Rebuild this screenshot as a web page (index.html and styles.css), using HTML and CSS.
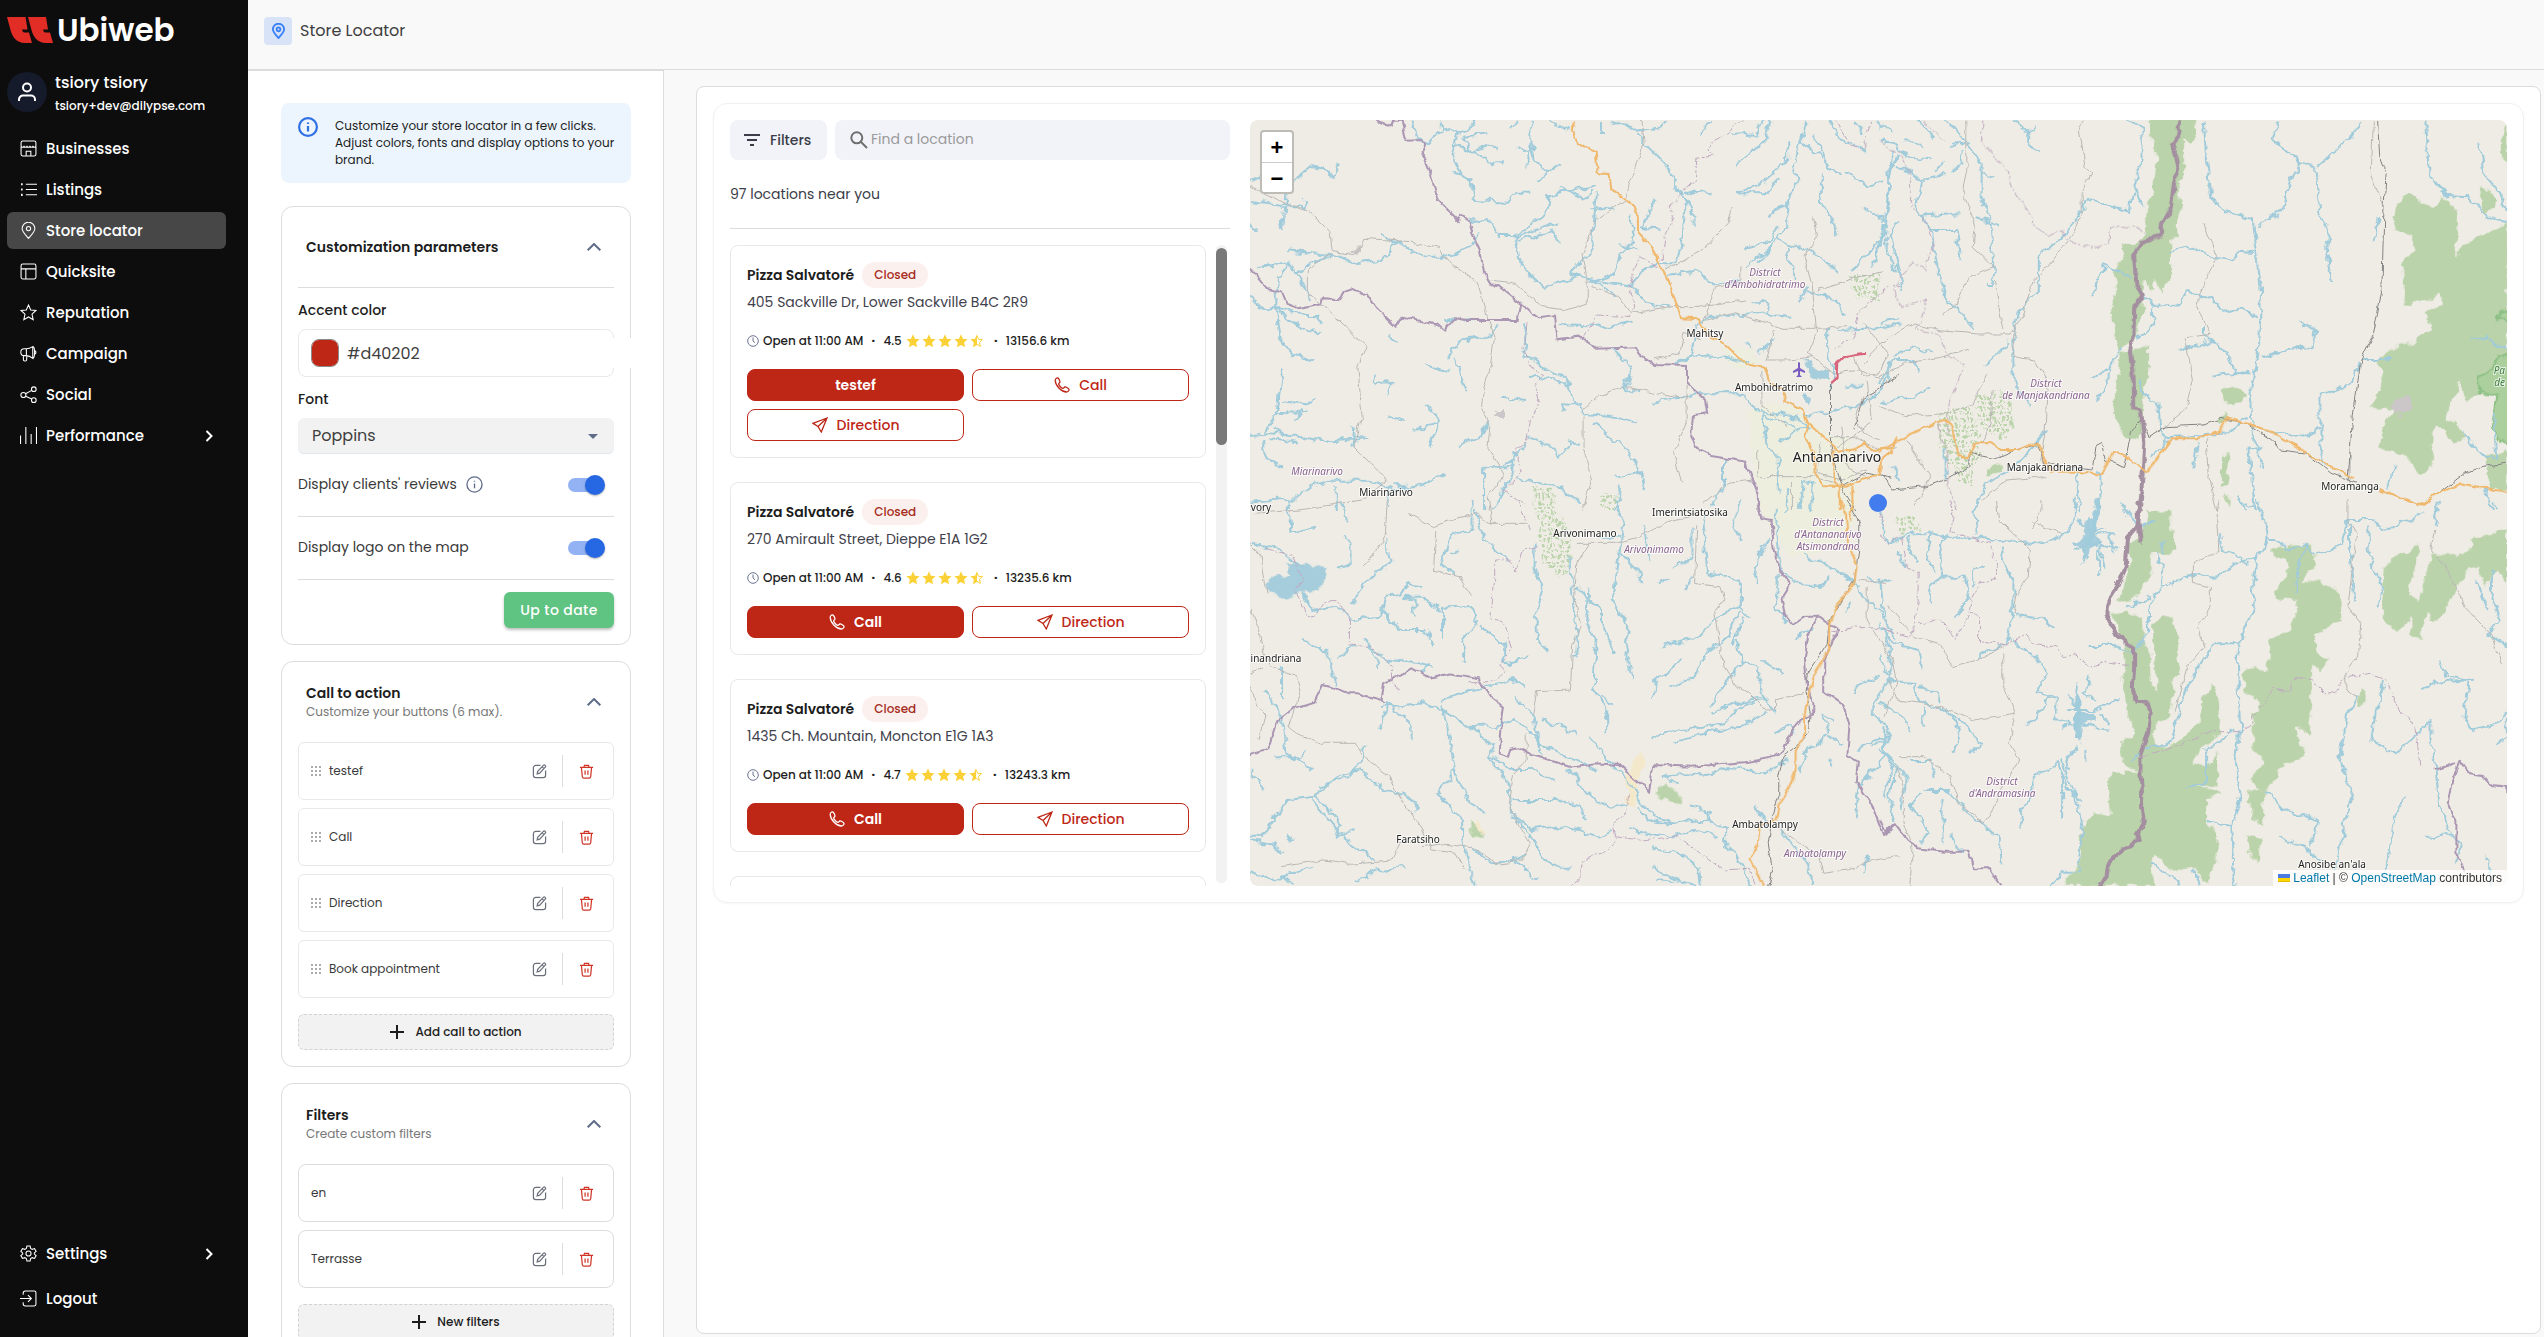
FILE: index.html
```html
<!DOCTYPE html>
<html lang="en">
<head>
<meta charset="UTF-8">
<meta name="viewport" content="width=device-width, initial-scale=1">
<title>Store Locator</title>
<link rel="stylesheet" href="styles.css">
</head>
<body>

<!-- Icons -->
<svg class="sprite" aria-hidden="true">
  <symbol id="i-shop" viewBox="0 0 16 16"><path d="M1 5.500V2.500A1.500 1.500 0 0 1 2.500 1h11A1.500 1.500 0 0 1 15 2.500v3M1 5.500c0 1.800 2.800 1.800 2.800 0 0 1.800 2.800 1.800 2.800 0 0 1.800 2.800 1.800 2.800 0 0 1.800 2.800 1.800 2.800 0 0 1.800 2.800 1.800 2.800 0M1 6v7.500A1.500 1.500 0 0 0 2.500 15h11a1.500 1.500 0 0 0 1.500-1.500V6M5.800 15v-4.500h4.400V15"/></symbol>
  <symbol id="i-list" viewBox="0 0 16 16"><path d="M5.500 3H16M5.500 8H16M5.500 13H16"/><path stroke-width="2" d="M1 3h1.500M1 8h1.500M1 13h1.500"/></symbol>
  <symbol id="i-pin" viewBox="0 0 16 16"><path d="M8 15.500C5 12 2 9.200 2 6.200a6 6 0 0 1 12 0C14 9.200 11 12 8 15.500z"/><circle cx="8" cy="6.200" r="2"/></symbol>
  <symbol id="i-layout" viewBox="0 0 16 16"><rect x="1" y="1" width="14" height="14" rx="1.500"/><path d="M1 5.500h14M5.500 5.500V15"/></symbol>
  <symbol id="i-star" viewBox="0 0 16 16"><path d="M8 1l2.100 4.600 4.900.5-3.700 3.400 1.100 5.200L8 12.200l-4.400 2.500 1.100-5.200L1 6.100l4.900-.5z"/></symbol>
  <symbol id="i-horn" viewBox="0 0 16 16"><path d="M12 1.500v11C10 10.800 8 10 6 10H4a3.200 3.200 0 0 1 0-6.500h2c2 0 4-.8 6-2zM6 3.500V10M3.200 10v4.200c0 1 2.600 1.200 3 0L6.500 10M12 1.500c2.300 0 2.300 11 0 11M14 5.500c1.300 0 1.300 3 0 3"/></symbol>
  <symbol id="i-share" viewBox="0 0 16 16"><circle cx="3.200" cy="8.500" r="2.400"/><circle cx="13" cy="3" r="2.200"/><circle cx="13" cy="13.300" r="2.200"/><path d="M5.300 7.300 11 4.100M5.300 9.700l5.800 2.500"/></symbol>
  <symbol id="i-bars" viewBox="0 0 16 16"><path d="M.5 8v8M5.500 0v16M10.500 6.500V16M15.500 0v16"/></symbol>
  <symbol id="i-gear" viewBox="0 0 16 16"><circle cx="8" cy="8" r="2.400"/><path d="M6.500 1h3l.5 2.200 1.500.9 2.200-.7 1.500 2.600L13.500 7.500v1l1.700 1.500-1.500 2.600-2.200-.7-1.500.9L9.500 15h-3L6 12.800l-1.500-.9-2.200.7L.8 10l1.700-1.500v-1L.8 6l1.500-2.600 2.200.7L6 3.200z"/></symbol>
  <symbol id="i-logout" viewBox="0 0 16 16"><path d="M3 4.500V3a2 2 0 0 1 2-2h8.500A1.500 1.500 0 0 1 15 2.500v11a1.500 1.500 0 0 1-1.500 1.500H5a2 2 0 0 1-2-2v-1.500M0 8h10.500M7.500 4.800 10.700 8l-3.200 3.200"/></symbol>
  <symbol id="i-user" viewBox="0 0 20 20"><circle cx="10" cy="5.500" r="4"/><path d="M2 19v-1.500a4 4 0 0 1 4-4h8a4 4 0 0 1 4 4V19"/></symbol>
  <symbol id="i-right" viewBox="0 0 8 12"><path d="M1.500 1l5 5-5 5"/></symbol>
  <symbol id="i-up" viewBox="0 0 14 8"><path d="M.7 7.300 7 1l6.300 6.300"/></symbol>
  <symbol id="i-info" viewBox="0 0 18 18"><circle cx="9" cy="9" r="8"/><path d="M9 8v5M9 5v1.200"/></symbol>
  <symbol id="i-edit" viewBox="0 0 16 16"><path d="M9 1.500H4A2.500 2.500 0 0 0 1.500 4v8A2.500 2.500 0 0 0 4 14.500h8a2.500 2.500 0 0 0 2.500-2.500V7M5.500 10.500l.6-2.700 6-6.300a1.300 1.300 0 0 1 2 1.900L8.200 9.700zM10.800 3l1.900 1.900"/></symbol>
  <symbol id="i-trash" viewBox="0 0 16 16"><path d="M1 3.600h14M5.300 3.400l.5-1.900h4.400l.5 1.900M2.600 3.800l.9 9.700a1.700 1.700 0 0 0 1.700 1.500h5.600a1.700 1.700 0 0 0 1.700-1.500l.9-9.700M6.500 7v4.500M9.500 7v4.500"/></symbol>
  <symbol id="i-grip" viewBox="0 0 10 10"><path d="M0 0h2v2H0zM4 0h2v2H4zM8 0h2v2H8zM0 4h2v2H0zM4 4h2v2H4zM8 4h2v2H8zM0 8h2v2H0zM4 8h2v2H4zM8 8h2v2H8z"/></symbol>
  <symbol id="i-plus" viewBox="0 0 14 14"><path d="M7 0v14M0 7h14"/></symbol>
  <symbol id="i-filter" viewBox="0 0 16 12"><path d="M0 1h16M3 6h10M6 11h4"/></symbol>
  <symbol id="i-search" viewBox="0 0 18 18"><circle cx="6.800" cy="6.800" r="5.500"/><path d="M11 11l6 6"/></symbol>
  <symbol id="i-clock" viewBox="0 0 12 12"><circle cx="6" cy="6" r="5.300"/><path d="M6 2.500V6l2 1.800"/></symbol>
  <symbol id="i-rate" viewBox="0 0 14 14"><path d="M7 .3l1.900 4.500 4.700.5-3.500 3.200 1 4.800L7 10.900l-4.100 2.400 1-4.800L.4 5.300l4.700-.5z"/></symbol>
  <symbol id="i-rate-half" viewBox="0 0 14 14"><path d="M7 .3v10.600l-4.100 2.400 1-4.800L.4 5.300l4.700-.5z"/><path fill="none" stroke="#fbd137" stroke-width="1" d="M7 1.500l1.600 3.800 3.900.4-3 2.700.9 4L7 10.300"/></symbol>
  <symbol id="i-phone" viewBox="0 0 16 16"><path d="M1.200 3.500C1 2 2.500.8 3.700 1c1 .1 2.500 3.300 2.200 4.200-.2.7-1.300 1-1.200 1.900.3 1.500 2.600 4 4.200 4.300.9.100 1.200-1.200 2-1.400.9-.2 3.900 1.300 4.100 2.300.2 1.300-1.200 2.700-2.500 2.700C7.500 15 1.500 8.800 1.200 3.500z"/></symbol>
  <symbol id="i-send" viewBox="0 0 16 16"><path d="M15 1 1 6.300l5 3.200L9.300 15zM15 1 6 9.500"/></symbol>
</svg>

<div class="app">
  <aside class="sidebar">
    <div class="logo">
      <svg width="47" height="26" viewBox="0 0 47 26" aria-hidden="true">
        <path d="M0 0h18.500l2 12.500H15c.3 1.600 1 2.600 2 3h5l3 10.500h-7C9 26 5 19 3.500 13z"/>
        <path d="M21 0h18l2 12.500h-5c.3 1.600 1 2.600 2 3h5L46 26h-7c-9 0-13-7-14.500-13z"/>
      </svg>
      <span>Ubiweb</span>
    </div>
    <div class="user">
      <span class="avatar"><svg width="20" height="20"><use href="#i-user"/></svg></span>
      <div>
        <div class="user-name">tsiory tsiory</div>
        <div class="user-mail">tsiory+dev@dilypse.com</div>
      </div>
    </div>
    <nav class="nav">
      <a href="#"><svg><use href="#i-shop"/></svg>Businesses</a>
      <a href="#"><svg><use href="#i-list"/></svg>Listings</a>
      <a href="#" class="active"><svg><use href="#i-pin"/></svg>Store locator</a>
      <a href="#"><svg><use href="#i-layout"/></svg>Quicksite</a>
      <a href="#"><svg><use href="#i-star"/></svg>Reputation</a>
      <a href="#"><svg><use href="#i-horn"/></svg>Campaign</a>
      <a href="#"><svg><use href="#i-share"/></svg>Social</a>
      <a href="#"><svg><use href="#i-bars"/></svg>Performance<svg class="arrow"><use href="#i-right"/></svg></a>
    </nav>
    <nav class="nav nav-bottom">
      <a href="#"><svg><use href="#i-gear"/></svg>Settings<svg class="arrow"><use href="#i-right"/></svg></a>
      <a href="#"><svg><use href="#i-logout"/></svg>Logout</a>
    </nav>
  </aside>

  <div class="page">
    <header class="topbar">
      <span class="topbar-icon"><svg width="15" height="16"><use href="#i-pin"/></svg></span>
      <h1>Store Locator</h1>
    </header>

    <div class="content">
      <section class="settings">
        <div class="info">
          <svg width="20" height="20"><use href="#i-info"/></svg>
          <p>Customize your store locator in a few clicks. Adjust colors, fonts and display options to your brand.</p>
        </div>

        <div class="panel">
          <div class="panel-head tall">
            <h2>Customization parameters</h2>
            <button class="toggle" aria-label="Collapse"><svg><use href="#i-up"/></svg></button>
          </div>
          <label class="field-label" for="accent">Accent color</label>
          <div class="color-field">
            <input type="color" value="#be2616" aria-label="Pick color">
            <input type="text" id="accent" value="#d40202">
          </div>
          <label class="field-label" for="font">Font</label>
          <div class="select">
            <select id="font"><option>Poppins</option></select>
          </div>
          <div class="switch-row">
            <label for="reviews">Display clients' reviews</label>
            <svg width="17" height="17"><use href="#i-info"/></svg>
            <input type="checkbox" id="reviews" checked>
          </div>
          <div class="switch-row">
            <label for="maplogo">Display logo on the map</label>
            <input type="checkbox" id="maplogo" checked>
          </div>
          <button class="save">Up to date</button>
        </div>

        <div class="panel">
          <div class="panel-head">
            <div>
              <h2>Call to action</h2>
              <p>Customize your buttons (6 max).</p>
            </div>
            <button class="toggle" aria-label="Collapse"><svg><use href="#i-up"/></svg></button>
          </div>
          <ul class="items light">
            <li><svg class="grip"><use href="#i-grip"/></svg><span>testef</span><button aria-label="Edit"><svg><use href="#i-edit"/></svg></button><button class="delete" aria-label="Delete"><svg><use href="#i-trash"/></svg></button></li>
            <li><svg class="grip"><use href="#i-grip"/></svg><span>Call</span><button aria-label="Edit"><svg><use href="#i-edit"/></svg></button><button class="delete" aria-label="Delete"><svg><use href="#i-trash"/></svg></button></li>
            <li><svg class="grip"><use href="#i-grip"/></svg><span>Direction</span><button aria-label="Edit"><svg><use href="#i-edit"/></svg></button><button class="delete" aria-label="Delete"><svg><use href="#i-trash"/></svg></button></li>
            <li><svg class="grip"><use href="#i-grip"/></svg><span>Book appointment</span><button aria-label="Edit"><svg><use href="#i-edit"/></svg></button><button class="delete" aria-label="Delete"><svg><use href="#i-trash"/></svg></button></li>
          </ul>
          <button class="add"><svg><use href="#i-plus"/></svg>Add call to action</button>
        </div>

        <div class="panel">
          <div class="panel-head">
            <div>
              <h2>Filters</h2>
              <p>Create custom filters</p>
            </div>
            <button class="toggle" aria-label="Collapse"><svg><use href="#i-up"/></svg></button>
          </div>
          <ul class="items">
            <li><span>en</span><button aria-label="Edit"><svg><use href="#i-edit"/></svg></button><button class="delete" aria-label="Delete"><svg><use href="#i-trash"/></svg></button></li>
            <li><span>Terrasse</span><button aria-label="Edit"><svg><use href="#i-edit"/></svg></button><button class="delete" aria-label="Delete"><svg><use href="#i-trash"/></svg></button></li>
          </ul>
          <button class="add"><svg><use href="#i-plus"/></svg>New filters</button>
        </div>
      </section>

      <main class="preview">
        <div class="locator">
          <div class="results">
            <div class="search-row">
              <button class="filter-btn"><svg><use href="#i-filter"/></svg>Filters</button>
              <label class="search"><svg><use href="#i-search"/></svg><input type="text" placeholder="Find a location"></label>
            </div>
            <p class="count">97 locations near you</p>
            <div class="list-wrap">
              <div class="list">
                <article class="store">
                  <div class="store-title"><h3>Pizza Salvatoré</h3><span class="badge">Closed</span></div>
                  <p class="address">405 Sackville Dr, Lower Sackville B4C 2R9</p>
                  <div class="meta"><svg class="clock"><use href="#i-clock"/></svg><b>Open at 11:00 AM</b><i>·</i><span>4.5</span><span class="stars"><svg><use href="#i-rate"/></svg><svg><use href="#i-rate"/></svg><svg><use href="#i-rate"/></svg><svg><use href="#i-rate"/></svg><svg><use href="#i-rate-half"/></svg></span><i>·</i><span>13156.6 km</span></div>
                  <div class="actions">
                    <button class="primary">testef</button>
                    <button><svg><use href="#i-phone"/></svg>Call</button>
                    <button><svg><use href="#i-send"/></svg>Direction</button>
                  </div>
                </article>
                <article class="store">
                  <div class="store-title"><h3>Pizza Salvatoré</h3><span class="badge">Closed</span></div>
                  <p class="address">270 Amirault Street, Dieppe E1A 1G2</p>
                  <div class="meta"><svg class="clock"><use href="#i-clock"/></svg><b>Open at 11:00 AM</b><i>·</i><span>4.6</span><span class="stars"><svg><use href="#i-rate"/></svg><svg><use href="#i-rate"/></svg><svg><use href="#i-rate"/></svg><svg><use href="#i-rate"/></svg><svg><use href="#i-rate-half"/></svg></span><i>·</i><span>13235.6 km</span></div>
                  <div class="actions">
                    <button class="primary"><svg><use href="#i-phone"/></svg>Call</button>
                    <button><svg><use href="#i-send"/></svg>Direction</button>
                  </div>
                </article>
                <article class="store">
                  <div class="store-title"><h3>Pizza Salvatoré</h3><span class="badge">Closed</span></div>
                  <p class="address">1435 Ch. Mountain, Moncton E1G 1A3</p>
                  <div class="meta"><svg class="clock"><use href="#i-clock"/></svg><b>Open at 11:00 AM</b><i>·</i><span>4.7</span><span class="stars"><svg><use href="#i-rate"/></svg><svg><use href="#i-rate"/></svg><svg><use href="#i-rate"/></svg><svg><use href="#i-rate"/></svg><svg><use href="#i-rate-half"/></svg></span><i>·</i><span>13243.3 km</span></div>
                  <div class="actions">
                    <button class="primary"><svg><use href="#i-phone"/></svg>Call</button>
                    <button><svg><use href="#i-send"/></svg>Direction</button>
                  </div>
                </article>
                <article class="store"></article>
              </div>
              <div class="scrollbar"><div class="thumb"></div></div>
            </div>
          </div>

          <div class="map">
            <svg class="map-art" viewBox="0 0 1257 766" preserveAspectRatio="xMidYMid slice" role="img" aria-label="Map around Antananarivo">
              <defs>
                <filter id="rough" filterUnits="userSpaceOnUse" x="0" y="0" width="1257" height="766" color-interpolation-filters="sRGB">
                  <feTurbulence type="fractalNoise" baseFrequency="0.09" numOctaves="3" seed="4"/>
                  <feDisplacementMap in="SourceGraphic" scale="10" xChannelSelector="R" yChannelSelector="G"/>
                </filter>
                <filter id="rough-sm" filterUnits="userSpaceOnUse" x="0" y="0" width="1257" height="766" color-interpolation-filters="sRGB">
                  <feTurbulence type="fractalNoise" baseFrequency="0.1" numOctaves="2" seed="9"/>
                  <feDisplacementMap in="SourceGraphic" scale="6" xChannelSelector="R" yChannelSelector="G"/>
                </filter>
                <pattern id="scrub" width="9" height="11" patternUnits="userSpaceOnUse">
                  <path class="wood" d="M0 1h3v3H1zM5 0l3 2-2 3zM2 6l3-1 1 4-3 1zM7 7h2v3z"/>
                </pattern>
              </defs>

              <!-- woods and lakes -->
              <g filter="url(#rough)">
                <g class="farm">
                  <path d="M500 290l40-10 30 30 30 10 10 60-20 50-50 6-30-50-10-60zM470 226l30 4 10 16-26 4z"/>
                </g>
                <g class="scrub">
                  <path d="M280 365l22 4 6 24 14 20-4 40-14 6-12-20-4-40zM353 372l14 2-4 14-12 0zM688 293l30-8 10 20 4 34-14 14-20-10-10-20zM704 326l18 0 2 40-16-6zM726 276l34-6 4 30-10 20-26-14zM600 155l28 0 0 24-26-2zM642 395l20 0 12 14-24 6z"/>
                </g>
                <g transform="translate(630 -30) scale(.4235 .3333)" class="wood">
                  <path d="M635 80L750 80 745 130 735 165 718 150 718 250 705 300 715 350 705 400 708 440 685 450 688 550 665 605 650 570 640 595 620 575 615 640 625 650 605 740 570 780 555 740 545 660 560 600 550 540 575 500 565 460 600 470 620 440 630 370 645 300 655 190 645 175z"/>
                  <path d="M570 790L635 760 635 830 625 900 615 1050 580 1040 550 970 560 860z"/>
                  <path d="M1212 380L1237 315 1262 310 1272 340 1310 348 1325 322 1340 330 1365 370 1362 440 1355 500 1395 455 1430 430 1481 400V795L1450 830 1415 870 1420 915 1380 930 1370 870 1350 940 1330 985 1360 1000 1385 1045 1355 1060 1330 1020 1310 1000 1300 1060 1310 1110 1275 1155 1245 1100 1215 1085 1180 1080 1185 1020 1210 960 1160 950 1190 870 1175 815 1230 760 1260 760 1300 720 1285 665 1330 640 1320 610 1290 635 1235 645 1240 560 1230 520 1260 480 1250 440 1215 420z"/>
                  <path class="park-edge" d="M1490 795H1460L1450 830 1412 865 1415 910 1455 915 1445 1010 1465 1055 1490 1060zM1490 690H1458L1466 660H1490z"/>
                  <path d="M1420 290l30 20 5 40-30 20-10-30zM1481 100v120l-15-20 0-60zM1435 1100l46-20v120h-46zM805 905l30-15 30 25-30 35-25-15zM800 985l20-20 0 30-20 10zM805 1100l20-15-5 100-15 10zM250 1130l40-10 0 25-40 10zM810 1210l20 20-5 20z"/>
                </g>
                <g transform="translate(630 380) scale(.4235 .3333)" class="wood">
                  <path d="M628 40L685 32 688 90 700 130 685 165 640 160 638 230 600 300 560 305 590 200 585 130 625 90z"/>
                  <path d="M550 345L585 335 618 350 622 430 635 440 640 560 655 570 645 480 645 365 665 348 690 350 700 400 698 480 715 500 695 530 685 650 655 670 640 700 655 740 700 730 750 660 765 590 785 545 805 620 800 700 760 750 735 790 765 800 795 755 800 860 700 850 620 820 570 790 570 720 600 710 585 640 570 560 580 440z"/>
                  <path d="M545 815H600L680 830 810 880 770 900 770 970 795 1000 795 1080 770 1150 740 1100 700 1115 640 1060 645 1158H430L470 1090 470 1010 500 935 545 950 540 850z"/>
                  <path d="M920 150L950 135 1020 130 1030 190 1000 240 1040 250 1085 270 1090 360 1025 405 1030 450 1055 480 1045 520 1020 490 1020 620 1015 700 980 680 1005 770 940 800 935 840 900 870 870 840 905 790 880 730 880 650 900 610 860 570 858 515 885 495 915 515 920 420 965 395 990 300 935 300 930 270 960 230 965 190z"/>
                  <path d="M870 880l35-15 0 110-25-20zM865 1010l40 0-15 80-15-20zM1190 190L1240 160 1265 130 1275 160 1255 230 1250 290 1275 300 1290 220 1300 165 1390 160 1400 115 1481 85V250L1455 210 1430 260 1410 200 1385 205 1340 320 1310 370 1290 340 1275 420 1255 400 1255 350 1215 390 1185 350z"/>
                  <path d="M1135 565l12 10-8 40-10 0z"/>
                </g>
                <g transform="translate(-10 380) scale(.4209 .3333)">
                  <path class="sand" d="M955 750l10 30-20 60-10 80-15-10-5-80zM560 960l15 10 5 30-20 0z"/>
                  <path class="wood" d="M545 960l30 40 5 15-30-10zM985 870l25-20 40 40 0 20-50-10z"/>
                  <path class="lake" d="M115 190l35 0 60 15-20 60-50 20-45 15-30-40 10-30 40 0z"/>
                </g>
                <path class="lake" d="M553 240l20 12 6 0 0 6-16 2zM553 274l8 2-2 8-6-2zM836 396l10 4-4 14 10 8-12 6-2 14-6-14-10-4 12-8zM824 588l8 4 12 0 2 8-12 4-4 20-6-20z"/>
                <path class="rock" d="M1142 285l16-12 6 14-10 8-12-2zM245 290l8 0 0 8-8 0zM100 130l10-4 0 8z"/>
              </g>

              <!-- rivers -->
              <g class="river" filter="url(#rough)">
                <g transform="translate(-10 -30) scale(.4209 .3333)">
                  <path d="M412 92l10 60 25 10 30-40 0-30M480 110l40 20 20-10 20-30M520 130l-15 70 25 60 20 10 5 60 80 5 20-30 30 0M550 190l-20-50 60-10M510 165l60 30 30 25 25 0M530 255l-30-10M555 185l30-20 25 10M690 92l0 90-30-10M690 150l10 60 30 30 35-15M735 240l-35 40M690 180l-8 50M640 120l25-25M860 100l0 35M735 92l45 30M850 285l-115 30-10 60-70 60-35 0-30-40-45-5M760 290l60 40 15-30M848 310l-15 180-50 60M830 355l60 0M655 440l100-40M740 420l20 40M655 440l10 90 60 60 50-20 30-10M660 450l80-25"/>
                  <path d="M880 92l60 30 60-10 15-20M940 130l70 90 40 95 30 60 0 30M1055 315l40-15 30 15M1060 330l-8 100-15 90-40 0M985 330l-20 60-15 20 50 10M925 380l10 70-30 40-15 60-45 20-60-15M840 570l90 20 30-50 35-20M900 460l40 20M930 590l40 50 50 10M780 550l60 20 50 50M1010 555l70-10 50 35 60-5M1090 130l30-35M1165 135l60-5 20-40M1260 92l-10 60-70 70M1180 310l60-30 60-70 0-60M1190 310l60 0 30-40M1200 470l60-15 20-50M1345 92l-10 60-20 60 10 60-25 60 0 80-40 60-60 60M1360 130l40 110 30 10M1380 200l-50-40M1380 250l0 90 30 60 10 30M1320 280l-20 60-50 40M1280 450l40 20 60 30 40 50M1300 470l20 100M1270 460l-40 60M1400 92l30 60 60 30M1568 190l-30 60 5 60-20 140-70 90M1480 350l50 40M1440 240l30 30 20 20 40-10M1560 400l-30 60 30 90M1550 130l-40-30M1480 130l-20-35M1340 600l80 30 20 50M1220 630l35 5 0 35-130 10-40 20-10 90-40 40M1250 670l60 10M1350 590l-20 50"/>
                  <path d="M24 330l70 10 60 20 0-30M100 420l8-110M24 270l50-20 10-30M130 270l40-45 30 10 20 30 15-45M24 400l15 25M105 480l110 15 60 25 60-10 35-50 70 40 50 0 60-30 15-40M335 430l35 30M45 535l70-20 15 30 90-50M120 510l-30 60-5 90 10 90 30 45 50 10M135 545l35 85M24 615l20 40 50 0 60 20 30 0M90 660l50 50 50 20M180 670l10 35M490 690l60-5M615 700l-20 35-80 20-20 50M510 800l30 110M440 825l60 15M355 740l20 20M325 850l0 40M325 880l40-5-15 35M755 705l100 5 80-15M680 700l-5 100 50 30 45 30 30 80 15 30 60 10 70 15M770 970l-5-30 50 5M890 780l40 50-15 70 40 10M840 1000l60 60 30 30 20 60 10 50M690 860l60 5 30 30M620 920l60 10M350 980l40 10M445 945l30 50-25 70M475 1000l-60 20M590 990l-20 50-50 30M685 1040l60 30 15 30 30-40M775 1050l30 15M980 935l80-15 30-10 90 0 60 60 50 0 60 40M1030 830l30-30 90 0 60 20M1230 790l40-45M1210 780l-5-30"/>
                  <path d="M100 835l-10 130-30 60 60 10 90 20 90-10M24 1040l40-10M80 1015l30 20M100 935l60 5 20-10M90 965l70 5M150 960l-20 30M75 1045l60 10M60 1050l0 50 40 30M270 1000l-5 70M265 1040l40 10M24 1235l110-10 40-40 40-10 90 0 60 20 70-10 50-30M230 1190l0 70M350 1190l5 60M370 1180l30 20M580 1260l0-120 60-20 40-60M590 1135l60-5M600 1260l40-90 15-90M660 1160l100 30 50 50M960 1200l-10-50-60 10M890 1260l15-70M1150 1110l0 80-30 50M1240 960l10 90 30 60 0 100M1240 980l80 30M1280 1060l40-40 30-10M1340 980l120-30 30-10 40-60 20-60M1395 720l0 60 20 60-10 50M1420 720l90-5 60-15M1440 890l40 0M1330 1260l10-80 20-10 0 90M1300 1260l5-60M1550 1130l15 40"/>
                </g>
                <g transform="translate(630 -30) scale(.4235 .3333)">
                  <path d="M0 150l30 10 40 40 50 5M30 180l-10 100-10 150-30 100M25 430l30 180M40 230l60 40 50-15M95 270l-10 90 40 60 5 70 20 130 35 40 40 60M100 380l90-10M130 420l50 0 10 90M90 92l40 50M60 150l40 20M150 92l50 50 40 80 0 110 20 50 10 200-15 0M230 385l55 15M245 250l25 15M200 150l-30 20M195 180l0 40-25 20M130 245l20-25M320 92l30 30 0 40 30 20M345 130l20-20M580 92l40 20 0 100-20 80-10 70-100-30-20 50-60 80-35 40 0 100-50 60-10 80 0 130 40 80M305 760l-60 70M600 290l20 65M500 620l30-100 60 40M765 92l5 120 10 110 50 50 50 15 10 100 10 120-5 160-20 140 5 100 10 90 20 40M675 490l60-20 60 35 35 5 15-25 45 5M945 92l-15 60 60 60-30 100-10 50-60 50M990 215l40 15 10 140 20 60-5 60 15 90M1035 225l50-50 15-20 40-60M1180 380l-15 80M615 610l30 35 60-5 20-40 60 30 30 35 40-10 35 30M645 650l0 60-45 40M765 705l0 30 55 50 15 60 40 5M710 780l80-30M785 860l50-10 35 0M900 800l60-20 60-5 10-55-40-20M1290 92l5 150 40 75 50 5 50 60 45 15M1415 160l10 90 40 60 15 50M1140 810l75 0M1135 815l-20 60-75 40 0 160 10 50M1040 1010l-40 30-90-15M610 875l30 60 20 10 5 90 20 10M580 770l-40 60 0 50-30 50M500 870l40-35M870 980l-50 50-140 15-40 60M745 1060l-5 70M900 1070l-30 10 15 180M1395 740l40 5 25 25 20 0M1380 1030l30 60 40 20M1450 960l5 150M1215 1125l-20 70M0 940l80-20 40-30M0 700l40-15M0 880l30-70 50 0 10 40M30 800l50-30 40 15M390 1020l-20 40-60 80-60 40-25 80M155 1075l0 90M465 1150l5 110M515 1150l5 110M845 1220l20 40M1430 1200l20 60"/>
                </g>
                <g transform="translate(-10 380) scale(.4209 .3333)">
                  <path d="M115 0l5 100 60-20M240 0l15 70M245 100l20 30 0 60-40 20M350 110l5 80-60 60-30 60M30 135l60 10 60 60M150 280l20 50 60-10 40 40 60-10 20-60 30-10 20-30 30 15M340 330l40 60 60 0 20 50M385 290l30 10 0 50M550 0l0 90-50 15-25 90 35 30M560 30l20 90 55 60M500 160l20-10M480 410l0-90 70-5 10 60-30 50 0 60M475 330l-40-40-50 0M570 380l60 50 0 60 55-15M150 420l60 40 15 100M225 480l50-50M290 420l60 60 80 10 30 10M430 520l20-30M310 440l20 70M700 130l0 80 20 40-15 100 0 60 25 50M780 170l10 80 10 160-5 60M800 260l60 70 0 40 30 90M830 260l-5 100 20 60-5 140 30 60 0 80M860 590l30 20M890 0l20 60-10 90-10 120-10 30 45 80-10 50 15 110M900 160l50 60 0 30M850 110l50 0M1100 40l10 180 80 20 0 80 20 30M1190 0l-20 70 20 50M1260 110l-30 60-5 80M1075 80l0 90-50 40M960 70l10 110M1000 250l20-15M1060 270l15-40"/>
                  <path d="M1190 320l-60 30-40 60-70 20-20 10M1190 330l-30 80-60 60-20 60-60 30M1050 480l-60 60-10 60M1180 420l10 60 40 20 10 80 30 60M1230 480l60 40M1200 480l-40 60-50 80M1240 590l-60 20-60 30M1250 630l-60 50-100 20-60 30M1250 600l-50 10-50 60-100 20-50 10-20 15M1200 350l-20 50-10 40M1270 30l10 160 40 60 60 10 20-30M1280 220l-10 100 30 50M1360 380l-40 40M1340 160l60 40 60 40 20 50 40 40 40 90M1380 640l20 60-60 60-10 50M1380 640l30 20M1270 700l30-20 20 20M1400 770l5 30M1300 780l-40 40-90-15-60 20-50-5-60 15M1000 830l40 20M1490 240l60 10M1440 340l10-40M1530 380l20 120-30 90-20 50 40 40-10 90-60 90-10 90M1520 530l-50 20-10 40M1540 700l-70 50M1550 800l-20 90M1545 920l10 50M1500 740l40-20"/>
                  <path d="M60 570l30 60 15 50 5 80 60 45M100 500l0 100M155 750l-15 25-60 0M24 810l30 55M24 1010l30 0 30-60 30-50 60-10 60-60 50-20 60 60 60 20 20 40M180 890l60 80-15 40 50-25M170 900l60 90 20 30 70 60M260 830l-70 30M300 740l-20 60-20 30M330 690l20-80 60 60 0 45M340 620l100-10 40 20 60 50 60 0 50-20 50 40 15 60M480 610l20 120 10 80-40 70 60 80 0 60 10 60 20 80M475 600l110-40 60-25 30 30M545 680l60 60-10 30 50 40 60 0 40 40M510 810l30 90 40 40M590 770l50 80 10 100 40 60 30 60 30 30 40 0M655 950l40 40 50-10 60 10 50 20 30-20M650 900l100 0 60 20 10 40M650 590l50 60 10 80 60 40 50 20 30 20M720 660l80 40M780 800l40 80 60 40 40-10M835 720l60 90 40 50 10 40 40 50 50 20M945 920l20 40 50 10 80-10 60 20 0 60 30 40 30 90M925 980l30 20 60 10 60-20 60 20M1070 915l40 20 10 40M980 1045l60 10 50 50 5 50M975 1100l60 40 50 15M980 1140l50 10M1225 920l30 60M1280 980l40 70 30 40 5 68M1430 730l-30-20M24 1120l50 20 100-40M100 1130l30 20M270 1150l60-40 60-10M110 1000l15 20M24 1020l50 10 30 30M550 1040l50 50 50-10 60 60M640 1080l40-20M1495 1060l-15 60"/>
                </g>
                <g transform="translate(630 380) scale(.4235 .3333)">
                  <path d="M0 40l20 90 50-30 50 0 40 10 60 0 50 10 100 10 60-20 30-40 0-80M230 0l-5 100M120 100l-10 60 20 60M65 110l10 50 15 30M60 200l-20-40M160 100l-20 40 10 90 50 0 10 60-30 60M150 220l-30 40 5 60M285 140l10 60 20 40 0 80-15 110M250 200l-30 0 0 60M0 230l10 120M0 370l30 60 60 20 15 60M0 460l20 80 60 10 10 50 60 30 30 20 60 80-30 30M90 560l50 20 0 30M100 620l5 60M0 610l60 50 15 30M170 640l20 60-20 60M300 430l-60 30-15 20M310 420l60 50 20 50-20 60 50 10-5 70 30 10M320 345l60 10 30 25M400 590l-30 60-20 20M10 680l0 80 50 60 0 40-15 70M0 750l40 60-20 80 10 70M70 780l50 0M120 790l10 40M100 870l60 0 40 60 80 80 5 80M90 880l-15 40 40 80-20 30M150 900l0 130M165 1000l30 60M420 785l20 70 30 60 10 80-15 60 5 60-40 0-30 50M420 790l-60 40 0 60-30 40 5 60M430 830l0 130"/>
                  <path d="M850 0l40 30M890 0l20 90 0 30-20 60-10 80 10 40-40 120-5 60 5 200-10 100 10 120-20 90 5 140 15 100M570 10l40 70 40-20M495 435l60 0 40 20 40-60 0-80 30-50 70-40 60 5 60-50 40-5M580 320l60-30M650 160l20 40-5 60M665 120l5 40M800 100l10 50 60 40M910 120l30 0 20 30 40-20 30 30 60-20 15-80 60 0 20 30 100-50M980 280l10-90 20-60M1110 80l0 100 10 120M1150 80l5 90 30 90-10 60M850 430l-60 0-60 120-20 60-20 110-60 30-40 30M840 690l-70 60 0 100-45 10M905 870l30 20 15 40 80 30-10 80M940 1010l60 30 40 40M770 965l60 20M1130 590l-30 60-15 120 30 110-30 160-10 60M1190 540l-20 100-10 80 60 40 60-70 20-30 0 60 10 70 10 110 20 90 30 40-10 60M1290 1010l60 0M1280 570l30-20 80-10-10 110 20 40 60-20 20-40M1320 480l20 50 60 10M1240 890l-30 80-20 190M1450 0l10 30M1445 210l0 80 20 80-30 30 50 40M1405 245l30 80M1480 650l0 60-20 30M640 1090l60 50 10 20M740 1110l20 48M1320 0l-10 80M1435 1070l10 88"/>
                  <path class="wide" d="M515 0l-10 90-15 50M465 590l0 130"/>
                  <path d="M460 130l60-30 40 0M470 60l30 40 30-20M455 150l50-20 60 20M480 190l10-60M515 225l0-80M530 200l-15-80M540 100l10 60M490 50l10 60M495 520l-10 60 25 20M470 560l-5 60M445 580l20 50M440 630l70 0 50-30M430 680l40-10 70 20M520 640l20 30M485 740l0 50M430 780l15 60 25 60M440 860l40 50M460 740l-20 60M450 670l-20 20"/>
                </g>
              </g>

              <!-- minor roads -->
              <g class="road" filter="url(#rough-sm)">
                <g transform="translate(-10 -30) scale(.4209 .3333)">
                  <path d="M24 290l90 55 50 20 50 60 5 60 60 10 15-50 110 10 70 20 30 50 60 50 20 90 20 80-10 90-15 60-5 50 20 60-5 70 40 80-40 60 10 90M215 490l-55 50 0 70 50 50 50 60 40 50-20 60 10 150-20 90 80 100-60 60-150 30-105 10M595 570l60 10 60 70 60 10 50-20 0-60-10-90 30-100 70-60 15-70 30-100-5-70-30-10M1100 700l30-110 60-20 0-40M1010 540l90-60 60-80 10-50M840 590l60 30 30 50 90-20 60 0 60-10 60-10M1110 690l60-20 60 20 60 25 90 0 60-5M1095 750l-40-20-10 60-60 20M1060 880l0 120-30 90 20 90M815 980l0 90 20 100-20 90M815 960l40-45 60-25 60 15 90 20M1270 720l-20 90 60 0 50-10M1360 380l10 60-30 60 20 90 10 140-20 60 60 60 60-10 60 30M1370 600l100-40 60-15M1480 700l60 90-20 60-40 10-20-60M1240 840l0 110 60 60M1400 1040l60 0 60 40 40-10M1380 1060l-10 90 60 20 60-30M1480 920l-20 60 20 50 40 20M1230 1080l0 80 130 0 60 20M1100 1240l60-60 60-10M1310 1180l0 80M1500 1000l-90 80M1430 1010l10 120 60 40M1490 870l10 120"/>
                  <path class="main" d="M1403 880l0 180 10 60 20 80 30 60M1568 850l-90 80-20 90M1430 1190l60-40 60 15"/>
                </g>
                <g transform="translate(630 -30) scale(.4235 .3333)">
                  <path d="M480 92l-10 20 15 120 15 20-25 60 0 60-20 60-60 100-40 60-15 80-30 60-80 0-90-10-60-20-60 40-60 80M205 92l0 150-10 60 30 100-5 70 50 60-60 30-30 80-30 30M270 570l20 150M320 700l-5 100 50 10 30 60-5 150-10 90M765 400l30 100-40 110-5 50 30 70-60 10 20 130-20 90-50 50M770 1045l5 110 20 105M1165 92l-5 160 30 100M1110 1050l0 140M0 860l60-40 90-20 60-20M0 950l60 30 100-10 60-30 30-90M265 900l-5 100-20 60M60 1050l60 110-40 90M240 1230l60-60 90-10"/>
                  <path class="main" d="M1175 92l5 110 15 50-5 100-5 250-20 130-30 80-20 190-10 170M210 1090l60 15 60-30 40-15 20 60 60 10 50 10 10-70 15-10 10 50 40 20 20-110 20-30 20 50 40-30 90-5 40-20 60 15 60 50 20 30 60 10 60 60 60 30M0 1150l30 50 80-10 60-30 40-30 0-40M1180 1200l100 45 40-35 60-60 40-20 60-10"/>
                </g>
                <g transform="translate(-10 380) scale(.4209 .3333)">
                  <path d="M24 130l25 30 15 120M24 330l20 60 10 60 20 50 60 30 10 50-30 100 20 20 60 30 80 0 20 40 60 60 20 50 60 110 20 60 60 10 20 50M350 0l-5 110-30 60-20 25M400 40l60 40 40-20 60-20 30 30 90 0M465 90l-5 120 60 20 30 60M830 130l-30 60-5 100 15 90-20 60-5 130-80 5-10 70M680 700l0 80-30 40-10 90 20 60 30 60-20 50-60 10-60-50-60-10-60 10M430 1030l-50 0-20 50-100 10-60-10-100 20M800 130l90 0 60-20 60-40 60-20M1085 80l-5 170 60 10 10 40-20 30 10 110 10 60 30 60 30 20 40 50 20 0 0-30 70-20M1470 240l60 10M1490 260l0 100 60 120 10 70-30 100M1275 980l100 90 10 50 60-10 60-30 60-10M24 520l30-20M60 640l-15 80M24 560l20 60 20 30"/>
                  <path class="main" d="M1440 0l30 60 0 90-10 90-60 120-5 70-45 90-5 60 10 60-5 60-20 30-40 40-10 60 0 60-15 60-10 80 10 80-10 58"/>
                </g>
                <g transform="translate(630 380) scale(.4235 .3333)">
                  <path d="M275 0l5 60 75 90-5 80-30 60-5 50M360 90l20-60 0-30M360 70l70 30M800 0l-5 60 5 90-60 40 0 60 40 10 0 60-30 60 15 60-40 60-30 140M1105 0l0 60 20 40-20 220 30 50-5 100-30 50 0 50 30 20M1310 90l-10 60 40 60 40 110 60 80 30 90M290 460l0 90 30 90-100 20-60-30-60-20-60-10-20-60M290 440l-60 40-60 20-30-70-60-20-60-90M320 640l-15 90 25 50-30 60-20 40-15 60-20 30-60-60-20-80-60-60-60 0M40 800l15 60 0 100 20 70 0 60-5 68"/>
                </g>
              </g>

              <!-- boundaries -->
              <g class="border" filter="url(#rough-sm)">
                <g transform="translate(-10 -30) scale(.4209 .3333)">
                  <path d="M326 92l34 20 4-20h20l12 60 36-2 10 15-8 23 18 57 11 55 7 30 48 60 6-12 21 17 7 35 18 50 10 70 15 33 17 3 53 54 45 42 36-6 6 72 54-8 30 25 9 11 95-4 10 23 35 30 77 3v52l43 50 5 40-34 5-4 65 18 40 30 18 80 17 15 50 15 45 2 50M24 538l41 59 35 11 10 32 30 15 50-15 5-15 45 3 10-23 16-7 24 14 10-4 25 47 45 55 15-30 85 25 15 17 25-37 30 5h120l8-45"/>
                  <path class="dash" d="M1196 92l-36 38-42 25-6 25 13 18-40 7-3 65-32 45-30 35 8 30-18 60-7 70-13 22-40-32-15 45-10 45 13 60-8 30-85-5-27 70M680 700l-8 80 18 50 32 28-22 22 10 50-20 60-10 70-25 20 13 70-43 50 55 45M1415 92l35 73 30 10 20-83M1568 590l-28 0-40 40-30 35-10 75-45 40"/>
                </g>
                <g transform="translate(630 -30) scale(.4235 .3333)">
                  <path class="thick" d="M706 90l-2 50-14 20 14 60-10 60-8 80-20 40-4 40-45 15-17 40 5 90 15 30-20 40-2 90-8 40 6 60 2 110 18 5 8 100-8 170-8 40 8 90"/>
                  <path class="dash" d="M0 150l20 30 30 10 22 60 0 100 35 40 20 60-20 90-30-25-45 80M240 92l0 60 60 90 10 50 50 90 0 20 40 40 30-20 20 35 60 20 30-20 5-50 60 5 20 15M30 600l20 50 60-20-10 60-20 25 60 20 20 60 40 30-20 60-20 60 0 90M140 1000l0 40 20 50 0 90 20 80M100 92l50 60"/>
                </g>
                <g transform="translate(-10 380) scale(.4209 .3333)">
                  <path d="M1228 0l10 55 25 5 5 90 15 60 25 40-20 40 10 60 15 25 30-25 35 0 20 20 25 20-20 45-15 50 0 90 45 40 15 60-5 90 25 20-5 60 35 60 30 100 20-30 10 0M1370 350l-20 60-8 60 5 90 15 50 0 30-30 20-20 30-20 60-20 20-60 15-140 15-90-5-10 80-70-80-60-5-60 10-60-25-30-10-30-20-20 5-5 20-20-10 5-90 5-50-40-40-20-45-70-15-40 15-30-20-20-10-20 15-45 30-5 50-60-20-20 0-30-15-30-10-20 50-50 20-40 40-20 80-80 40"/>
                  <path class="dash" d="M60 145l60 20 30 80-20 20 30 85 20-5 20-40 30 0 30 50 0 80 50 5 50 60 0 50 20 20M705 140l-30 10-20 60-15-30-35 0 0 60-10 120 30 5 20 80-30 50 15 20-25 30-60 0M690 90l-30-90M1405 400l60-20 40 0 60 20M925 880l-10 60-30 30 10 50-30 40-50 20-10 60-20 18M890 1010l60 10 90-10 50 50 60 50 60-5 15 50"/>
                </g>
                <g transform="translate(630 380) scale(.4235 .3333)">
                  <path class="thick" d="M606 0l10 30-10 50-20 30-6 90-20 60-15 30-10 40 0 20 20 45 20 25 25 25 0 60-3 60 8 40 28 5 6 30-6 60-18 60 0 60 4 60 0 50 4 40-14 30 4 20-50 40-24 30-4 40-16 30 0 50"/>
                  <path d="M0 960l15 40 20-30 30 50 25 25 60 10 60 0 10 50 40 0 25 53M1481 880l0-20-40-5-20-30-30-5-20-35-20 60-10 60 20 60 0 90 20 60M1310 810l50-20"/>
                  <path class="dash" d="M0 110l20 20 30-25 15 100 25 10 0 90-10 80-15 30-60-30M165 0l10 50-10 45 60 25 40 10 0 40 10 30 0 40-40 5-20 50-5 50-30 70-40-60-30 15-20 0M215 340l20 5 0 80 60 10 50-30 20 30 50 5 20 30 20-10 40 40 30-15 70 10M610 770l90-30 80-45 70 0 30-20 0-30 30-40 20-40 40 10 0-30 30-15 25 15 30 40 25-10 15-40 60-15 40 20 30 90 20 20 20 30 10 120M0 40l10 40"/>
                </g>
              </g>

              <!-- primary roads -->
              <g class="primary-road" filter="url(#rough-sm)">
                <g transform="translate(-10 -30) scale(.4209 .3333)">
                  <path d="M798 92l-10 28 17 40 40 25 5 65 28 2 4 48 43 35 20 40 1 55 39 50 13 50 20 40 30 115 42 3 20 47 40 25 50 60 46 10 12 50 32 15 6 40 39 20 15 45 60 70 10 15 40-7 25-18 15 20 50-5 10-30M1350 1005l-8 35 23 60v50l20 35 55 5 60-30 20-5v-45l30-30M1410 1080v80l15 40v60M1455 1190v70"/>
                  <path class="motorway" d="M1403 880l13-15 2-45 17-20 50-10"/>
                </g>
                <g transform="translate(630 -30) scale(.4235 .3333)">
                  <path d="M0 1085l40-30 60-40 50-25 20 10 15 95 20 10 20-45 40 0 20 20 40 0 30-20 20 5 20 60 10 20 60 0 60 10 25-70 30 15 40 35 10 10 20-30 40-70 60 0 50-20 20-40 60 20 60 30 60 50 60 40 60 40M1180 1200l100 45 40-35 50-30 60 15 50 10"/>
                </g>
                <g transform="translate(-10 380) scale(.4209 .3333)">
                  <path d="M1425 0l15 50 5 90 20 60-5 50-40 60-20 60 0 80-40 80-10 60-10 60 0 60-20 40 0 60-15 50-20 40-10 60-40 15-5 60-20 40 35 90"/>
                  <path d="M1455 0l-5 60"/>
                </g>
              </g>

              <path class="plane" d="M548 243q1-2 2 0v5l5 3v2l-5-2v4l2 2h-6l2-2v-4l-5 2v-2l5-3z"/>

              <g class="labels">
                <g class="town">
                  <text x="455" y="217">Mahitsy</text>
                  <text x="524" y="271">Ambohidratrimo</text>
                  <text x="136" y="376">Miarinarivo</text>
                  <text x="11" y="391">vory</text>
                  <text x="440" y="396">Imerintsiatosika</text>
                  <text x="335" y="417">Arivonimamo</text>
                  <text x="26" y="542">inandriana</text>
                  <text x="168" y="723">Faratsiho</text>
                  <text x="515" y="708">Ambatolampy</text>
                  <text x="795" y="351">Manjakandriana</text>
                  <text x="1100" y="370">Moramanga</text>
                  <text x="1082" y="748">Anosibe an'ala</text>
                  <text class="city" x="587" y="342">Antananarivo</text>
                </g>
                <g class="district">
                  <text x="515" y="156">District</text><text x="515" y="168">d'Ambohidratrimo</text>
                  <text x="67" y="355">Miarinarivo</text>
                  <text x="404" y="433">Arivonimamo</text>
                  <text x="578" y="406">District</text><text x="578" y="418">d'Antananarivo</text><text x="578" y="430">Atsimondrano</text>
                  <text x="565" y="737">Ambatolampy</text>
                  <text x="796" y="267">District</text><text x="796" y="279">de Manjakandriana</text>
                  <text x="752" y="665">District</text><text x="752" y="677">d'Andramasina</text>
                </g>
                <g class="park"><text x="1255" y="254">Pa</text><text x="1255" y="266">de</text></g>
              </g>
              <circle class="here" cx="628" cy="383" r="9"/>
            </svg>
            <div class="zoom">
              <button aria-label="Zoom in">+</button>
              <button aria-label="Zoom out">−</button>
            </div>
            <div class="credit"><svg width="12" height="8" aria-hidden="true"><path fill="#4c7be1" d="M0 0h12v4H0z"/><path fill="#ffd500" d="M0 4h12v3H0z"/><path fill="#e0bc00" d="M0 7h12v1H0z"/></svg> <a href="#">Leaflet</a> | © <a href="#">OpenStreetMap</a> contributors</div>
          </div>
        </div>
      </main>
    </div>
  </div>
</div>
</body>
</html>
```

FILE: styles.css
```css
* {
  box-sizing: border-box;
}
body {
  margin: 0;
  font-family: Poppins, Inter, sans-serif;
  font-size: 14px;
  color: #1d1d1d;
  background: #f9f9f9;
}
h1, h2, h3, p, ul {
  margin: 0;
  padding: 0;
}
button, input, select {
  font-family: inherit;
}
button {
  cursor: pointer;
}
svg {
  fill: none;
  stroke: currentColor;
  flex: none;
}
.sprite {
  display: none;
}
.app {
  display: flex;
  height: 100vh;
  overflow: hidden;
}

/* Sidebar */
.sidebar {
  width: 248px;
  flex: none;
  display: flex;
  flex-direction: column;
  padding: 11px 22px 20px 7px;
  background: #0d0d0d;
  color: #fff;
}
.logo {
  display: flex;
  align-items: center;
  gap: 3px;
  height: 38px;
  font-size: 31px;
  font-weight: 600;
}
.logo svg {
  fill: #e12d25;
  stroke: none;
}
.user {
  display: flex;
  align-items: center;
  gap: 8px;
  margin: 23px 0 18px;
  height: 40px;
  font-weight: 500;
}
.avatar {
  display: flex;
  align-items: center;
  justify-content: center;
  width: 40px;
  height: 40px;
  border-radius: 50%;
  background: #151b2a;
}
.avatar svg {
  stroke-width: 2;
}
.user-name {
  padding-top: 1px;
  font-size: 16px;
  line-height: 26px;
}
.user-mail {
  font-size: 12px;
  line-height: 20px;
}
.nav {
  display: flex;
  flex-direction: column;
  gap: 4px;
}
.nav a {
  display: flex;
  align-items: center;
  gap: 9px;
  height: 37px;
  padding: 0 13px;
  border-radius: 6px;
  color: #fff;
  font-size: 15px;
  font-weight: 500;
  text-decoration: none;
}
.nav a.active {
  background: #474747;
}
.nav svg {
  width: 17px;
  height: 17px;
}
.nav .arrow {
  width: 8px;
  height: 12px;
  margin-left: auto;
  stroke-width: 2;
}
.nav-bottom {
  margin-top: auto;
  gap: 8px;
}

/* Top bar */
.page {
  flex: 1;
  min-width: 0;
  display: flex;
  flex-direction: column;
}
.topbar {
  display: flex;
  align-items: center;
  gap: 8px;
  height: 70px;
  flex: none;
  padding: 0 16px 8px;
  border-bottom: 1px solid #dcdcdc;
}
.topbar h1 {
  font-size: 16px;
  font-weight: 400;
  color: #3f3f3f;
}
.topbar-icon {
  display: flex;
  align-items: center;
  justify-content: center;
  width: 28px;
  height: 28px;
  border-radius: 4px;
  background: #d8e3f7;
  color: #3b82f6;
}
.topbar-icon svg {
  stroke-width: 2;
}
.content {
  flex: 1;
  min-height: 0;
  display: flex;
}

/* Settings column */
.settings {
  width: 416px;
  flex: none;
  overflow: hidden;
  padding: 32px 32px 0 33px;
  background: #fff;
  border-top: 1px solid #dcdcdc;
  border-right: 1px solid #dcdcdc;
}
.info {
  display: flex;
  gap: 17px;
  padding: 14px 14px 15px;
  border-radius: 8px;
  background: #ecf5fe;
  font-size: 12px;
  line-height: 17px;
}
.info svg {
  margin-left: 3px;
  color: #2f6fe4;
  stroke-width: 2;
}
.panel {
  margin-top: 16px;
  padding: 16px;
  border: 1px solid #dcdcdc;
  border-radius: 12px;
}
.info + .panel {
  margin-top: 23px;
}
.panel-head {
  display: flex;
  align-items: center;
  justify-content: space-between;
  height: 48px;
  margin-bottom: 16px;
  padding: 0 8px;
}
.panel-head.tall {
  height: 65px;
  margin-bottom: 12px;
  border-bottom: 1px solid #dcdcdc;
  padding-bottom: 16px;
}
.panel-head h2 {
  font-size: 14px;
  line-height: 20px;
  font-weight: 600;
}
.panel-head p {
  font-size: 12px;
  line-height: 18px;
  color: #777;
}
.toggle {
  padding: 4px;
  border: 0;
  background: none;
  color: #5f6c8a;
}
.toggle svg {
  display: block;
  width: 16px;
  height: 8px;
  stroke-width: 2;
}
.field-label {
  display: block;
  font-weight: 500;
  line-height: 21px;
}
.color-field {
  display: flex;
  align-items: center;
  gap: 8px;
  height: 48px;
  margin: 8px 0 12px;
  padding-left: 12px;
  border: 1px solid #e8e8e8;
  border-radius: 8px;
}
.color-field input[type="color"] {
  width: 28px;
  height: 28px;
  flex: none;
  padding: 0;
  border: 1px solid #8a8a8a;
  border-radius: 8px;
  overflow: hidden;
  background: none;
}
.color-field input::-webkit-color-swatch-wrapper {
  padding: 0;
}
.color-field input::-webkit-color-swatch {
  border: 0;
}
.color-field input[type="text"] {
  width: 290px;
  flex: none;
  height: 30px;
  padding: 0;
  border: 0;
  background: #fff;
  font-size: 16px;
  color: #3f3f3f;
}
.select {
  position: relative;
  margin: 8px 0 12px;
}
.select::after {
  content: "";
  position: absolute;
  right: 16px;
  top: 16px;
  border: 5px solid transparent;
  border-top-color: #5f6c8a;
  border-bottom: 0;
}
.select select {
  display: block;
  width: 100%;
  height: 36px;
  padding: 0 14px;
  border: 0;
  border-bottom: 1px solid #dfe6ef;
  border-radius: 6px;
  appearance: none;
  background: #f2f2f2;
  font-size: 16px;
  color: #3f3f3f;
}
.switch-row {
  display: flex;
  align-items: center;
  gap: 9px;
  height: 51px;
  margin-bottom: 12px;
  padding: 0 10px 13px 0;
  border-bottom: 1px solid #dcdcdc;
  color: #3a3a3a;
}
.switch-row svg {
  color: #5f6c8a;
  stroke-width: 1.4;
}
.switch-row input {
  position: relative;
  width: 34px;
  height: 14px;
  margin: 0 2px 0 auto;
  appearance: none;
  border-radius: 7px;
  background: #92b2f3;
}
.switch-row input::before {
  content: "";
  position: absolute;
  top: -3px;
  right: -3px;
  width: 20px;
  height: 20px;
  border-radius: 50%;
  background: #2668e4;
  box-shadow: 0 1px 2px rgba(0,0,0,0.3);
}
.save {
  display: block;
  width: 110px;
  height: 36px;
  margin-left: auto;
  border: 0;
  border-radius: 6px;
  background: #5fc382;
  color: #fff;
  font-size: 14px;
  font-weight: 500;
  letter-spacing: 0.4px;
  box-shadow: 0 2px 3px rgba(0,0,0,0.25);
}
.items {
  display: flex;
  flex-direction: column;
  gap: 8px;
  margin-bottom: 16px;
  list-style: none;
}
.items li {
  display: flex;
  align-items: center;
  height: 58px;
  padding: 0 11px 0 12px;
  border: 1px solid #dcdcdc;
  border-radius: 8px;
  font-size: 12px;
  color: #3a3a3a;
}
.items.light li {
  border-color: #e8e8e8;
  border-radius: 6px;
}
.items span {
  flex: 1;
}
.items .grip {
  width: 10px;
  height: 10px;
  margin-right: 8px;
  fill: #ababab;
  stroke: none;
}
.items button {
  display: flex;
  align-items: center;
  justify-content: center;
  width: 46px;
  height: 32px;
  padding: 0;
  border: 0;
  background: none;
  color: #6a6f7a;
}
.items .delete {
  width: 40px;
  padding-left: 8px;
  border-left: 1px solid #dcdcdc;
  color: #d03426;
}
.items button svg {
  width: 15px;
  height: 15px;
  stroke-width: 1.3;
}
.add {
  display: flex;
  align-items: center;
  justify-content: center;
  gap: 11px;
  width: 100%;
  height: 36px;
  border: 1px dashed #d2d2d2;
  border-radius: 6px;
  background: #f2f2f2;
  color: #1d1d1d;
  font-size: 12px;
  font-weight: 500;
}
.add svg {
  width: 14px;
  height: 14px;
  stroke-width: 2;
}

/* Preview */
.preview {
  flex: 1;
  min-width: 0;
  margin: 16px 3px 3px 32px;
  padding: 16px;
  border: 1px solid #dcdcdc;
  border-radius: 8px;
  background: #fff;
}
.locator {
  display: flex;
  gap: 20px;
  height: 800px;
  padding: 16px;
  border: 1px solid #f0f0f0;
  border-radius: 14px;
  box-shadow: 0 1px 2px rgba(0,0,0,0.04);
}
.results {
  width: 500px;
  flex: none;
  display: flex;
  flex-direction: column;
}
.search-row {
  display: flex;
  gap: 8px;
}
.filter-btn {
  display: flex;
  align-items: center;
  gap: 10px;
  width: 97px;
  height: 40px;
  padding: 0 14px;
  border: 0;
  border-radius: 8px;
  background: #f2f3f9;
  color: #3a3d47;
  font-size: 14px;
  font-weight: 500;
}
.filter-btn svg {
  width: 16px;
  height: 12px;
  stroke-width: 2;
}
.search {
  flex: 1;
  display: flex;
  align-items: center;
  gap: 1px;
  padding: 0 15px;
  border-radius: 8px;
  background: #f2f3f9;
}
.search svg {
  width: 18px;
  height: 18px;
  color: #6f6f6f;
  stroke-width: 2;
}
.search input {
  flex: 1;
  height: 23px;
  padding: 0 2px 2px;
  border: 0;
  outline: 0;
  background: none;
  font-size: 14px;
}
.search input::placeholder {
  color: #9a9a9a;
}
.count {
  padding: 24px 0 23px;
  border-bottom: 1px solid #dcdcdc;
  line-height: 21px;
  color: #3a3d47;
}
.list-wrap {
  flex: 1;
  min-height: 0;
  display: flex;
  gap: 10px;
  margin-top: 16px;
}
.list {
  flex: 1;
  overflow: hidden;
}
.store {
  min-height: 173px;
  margin-bottom: 24px;
  padding: 16px;
  border: 1px solid #e8e8e8;
  border-radius: 8px;
}
.store-title {
  display: flex;
  align-items: center;
  gap: 8px;
}
.store-title h3 {
  font-size: 14px;
  font-weight: 600;
}
.badge {
  padding: 0 12px;
  border-radius: 13px;
  background: #fcf0ee;
  color: #a62c20;
  font-size: 12px;
  font-weight: 500;
  line-height: 26px;
}
.address {
  margin: 4px 0 19px;
  line-height: 21px;
  color: #3f424c;
}
.meta {
  display: flex;
  align-items: center;
  height: 18px;
  font-size: 12px;
  font-weight: 500;
}
.meta b {
  font-weight: 500;
}
.meta i {
  width: 20px;
  text-align: center;
  font-style: normal;
  font-weight: 700;
}
.meta .clock {
  width: 12px;
  height: 12px;
  margin-right: 4px;
  color: #6b7590;
}
.stars {
  display: flex;
  gap: 2px;
  margin: 0 2px 0 4px;
}
.stars svg {
  width: 14px;
  height: 14px;
  fill: #fbd137;
  stroke: none;
}
.actions {
  display: grid;
  grid-template-columns: 1fr 1fr;
  gap: 8px;
  margin-top: 19px;
}
.actions button {
  display: flex;
  align-items: center;
  justify-content: center;
  gap: 9px;
  height: 32px;
  border: 1px solid #be2616;
  border-radius: 8px;
  background: #fff;
  color: #be2616;
  font-size: 14px;
  font-weight: 500;
}
.actions .primary {
  background: #be2616;
  color: #fff;
  font-weight: 600;
}
.actions svg {
  width: 16px;
  height: 16px;
  stroke-width: 1.3;
}
.scrollbar {
  width: 11px;
  margin: 0 3px 3px 0;
  padding-top: 3px;
  border-radius: 6px;
  background: #f2f2f2;
}
.thumb {
  height: 31%;
  border-radius: 6px;
  background: #797979;
}

/* Map */
.map {
  position: relative;
  flex: 1;
  min-width: 0;
  overflow: hidden;
  border-radius: 8px;
  background: #eeece4;
}
.map-art {
  display: block;
  width: 100%;
  height: 100%;
  stroke: none;
}
.map-art path {
  vector-effect: non-scaling-stroke;
}
.wood {
  fill: #bad3aa;
}
.park-edge {
  fill: #abcf9d;
  stroke: #8cc084;
  stroke-width: 2;
}
.scrub {
  fill: url(#scrub);
}
.farm {
  fill: #edf0d8;
  opacity: 0.5;
}
.sand {
  fill: #f4e8cb;
}
.lake {
  fill: #a6cddb;
}
.rock {
  fill: #cbc7c8;
}
.river {
  stroke: #a0cbdb;
  stroke-width: 2;
  stroke-linejoin: round;
}
.river .wide {
  stroke-width: 5;
}
.road {
  stroke: #b9b8b6;
}
.road .main {
  stroke: #838383;
}
.border {
  stroke: #ab96b3;
  stroke-width: 2;
}
.border .thick {
  stroke: #a48fa0;
  stroke-width: 4;
}
.border .dash {
  stroke: #c0a9c1;
  stroke-width: 1;
  stroke-dasharray: 8 2 2 2;
}
.primary-road {
  stroke: #f0b86c;
  stroke-width: 2;
}
.primary-road .motorway {
  stroke: #d9657c;
  stroke-width: 3;
}
.plane {
  fill: #7a5cc0;
}
.labels {
  font-family: "Noto Sans", sans-serif;
  font-size: 10px;
  text-anchor: middle;
  stroke: #fff;
  stroke-width: 2;
  stroke-opacity: 0.7;
  paint-order: stroke;
}
.town {
  fill: #222;
}
.city {
  font-size: 14px;
}
.district {
  fill: #8a6390;
  font-style: italic;
}
.park {
  fill: #3b7d3b;
  font-style: italic;
  text-anchor: end;
}
.here {
  fill: #437ced;
}
.zoom {
  position: absolute;
  top: 10px;
  left: 10px;
  border: 2px solid #bdbcb7;
  border-radius: 4px;
  background: #fff;
}
.zoom button {
  display: block;
  width: 30px;
  height: 30px;
  padding: 2px 0 0;
  border: 0;
  background: none;
  color: #000;
  font: bold 22px/28px "Liberation Sans", sans-serif;
}
.zoom button + button {
  border-top: 1px solid #ccc;
}
.credit {
  position: absolute;
  right: 0;
  bottom: 0;
  padding: 0 5px;
  background: rgba(255,255,255,0.8);
  color: #333;
  font: 12px/16px "Liberation Sans", sans-serif;
}
.credit svg {
  stroke: none;
}
.credit a {
  color: #0078a8;
  text-decoration: none;
}
```
